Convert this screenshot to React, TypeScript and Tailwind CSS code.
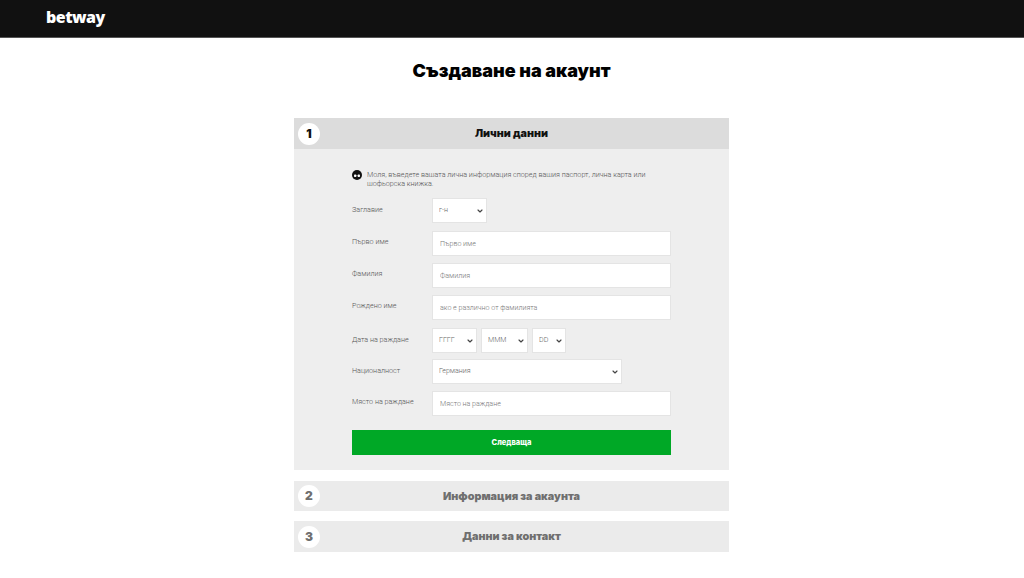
import * as React from 'react';
import { ChevronDown } from 'lucide-react';

const font = { fontFamily: 'Inter, "Noto Sans", sans-serif' };
const bodyFont = { fontFamily: 'Roboto, "Noto Sans", sans-serif' };

const StepHeader = ({ n, title, active, className }: { n: number; title: string; active?: boolean; className: string }) => (
  <div className={`relative flex items-center justify-center ${active ? 'bg-[#dcdcdc] text-[#111111]' : 'bg-[#ebebeb] text-[#6f6f6f]'} ${className}`}>
    <span className="absolute left-[4px] top-1/2 flex h-[22px] w-[22px] -translate-y-1/2 items-center justify-center rounded-full bg-white text-[12px] font-black">
      {n}
    </span>
    <h2 className="pt-[2px] text-[10.8px] font-black leading-none">{title}</h2>
  </div>
);

const Row = ({ label, className, raised, children }: { label: string; className: string; raised?: boolean; children: React.ReactNode }) => (
  <div className={`flex items-center ${className}`}>
    <label className={`w-[80px] shrink-0 text-[7.2px] font-light text-[#555555] ${raised ? 'pb-[2px]' : ''}`}>{label}</label>
    {children}
  </div>
);

const TextField = ({ placeholder }: { placeholder: string }) => (
  <input
    placeholder={placeholder}
    className="h-[25px] w-[239px] border border-[#e4e4e4] bg-white px-[7px] text-[7.1px] font-light outline-none placeholder:text-[#777777]"
  />
);

const Select = ({ value, className }: { value: string; className: string }) => (
  <div className={`relative h-[25px] ${className}`}>
    <select
      defaultValue={value}
      className="block h-full w-full appearance-none border border-[#e4e4e4] bg-white pl-[6px] text-[7.1px] font-light text-[#666666] outline-none"
    >
      <option>{value}</option>
    </select>
    <ChevronDown size={8} strokeWidth={3.5} className="pointer-events-none absolute right-[3px] top-[9px] text-[#444444]" />
  </div>
);

const IdIcon = () => (
  <svg width="10" height="10" viewBox="0 0 10 10" className="shrink-0">
    <circle cx="5" cy="5" r="5" fill="#111111" />
    <rect x="2" y="4.5" width="2.4" height="2.6" rx="0.8" fill="#ffffff" />
    <rect x="5.6" y="4.5" width="2.4" height="2.6" rx="0.8" fill="#ffffff" />
  </svg>
);

export default function App() {
  return (
    <div className="min-h-[578px] bg-white" style={font}>
      <header className="flex h-[38px] items-center border-b border-[#555555] bg-[#111111] pl-[46px]">
        <span className="mb-[4px] text-[16px] font-extrabold leading-none tracking-[-0.5px] text-white" style={{ fontFamily: '"Open Sans", sans-serif' }}>betway</span>
      </header>
      <div className="pr-px">
        <h1 className="mt-[22px] text-center text-[18px] font-black leading-[22px] text-black">Създаване на акаунт</h1>
        <main className="mx-auto mt-[36px] w-[435px]">
          <StepHeader n={1} title="Лични данни" active className="h-[31px]" />
          <div className="h-[321px] bg-[#eeeeee] pl-[58px] pt-[21px]" style={bodyFont}>
            <div className="flex w-[319px] gap-[5px]">
              <IdIcon />
              <p className="text-[7.2px] font-light leading-[9px] text-[#555555]">Моля, въведете вашата лична информация според вашия паспорт, лична карта или шофьорска книжка.</p>
            </div>
            <Row label="Заглавие" className="mt-[10px]">
              <Select value="г-н" className="w-[55px]" />
            </Row>
            <Row label="Първо име" raised className="mt-[8px]"><TextField placeholder="Първо име" /></Row>
            <Row label="Фамилия" raised className="mt-[7px]"><TextField placeholder="Фамилия" /></Row>
            <Row label="Рождено име" raised className="mt-[7px]"><TextField placeholder="ако е различно от фамилията" /></Row>
            <Row label="Дата на раждане" className="mt-[8px]">
              <div className="flex gap-[4px]">
                <Select value="ГГГГ" className="w-[45px]" />
                <Select value="МММ" className="w-[47px]" />
                <Select value="DD" className="w-[34px]" />
              </div>
            </Row>
            <Row label="Националност" className="mt-[6px]">
              <Select value="Германия" className="w-[190px]" />
            </Row>
            <Row label="Място на раждане" raised className="mt-[7px]"><TextField placeholder="Място на раждане" /></Row>
            <button className="mt-[14px] h-[25px] w-[319px] bg-[#00a826] text-[7.5px] font-extrabold text-white" style={font}>Следваща</button>
          </div>
          <StepHeader n={2} title="Информация за акаунта" className="mt-[11px] h-[30px]" />
          <StepHeader n={3} title="Данни за контакт" className="mt-[10px] h-[31px]" />
        </main>
      </div>
    </div>
  );
}
